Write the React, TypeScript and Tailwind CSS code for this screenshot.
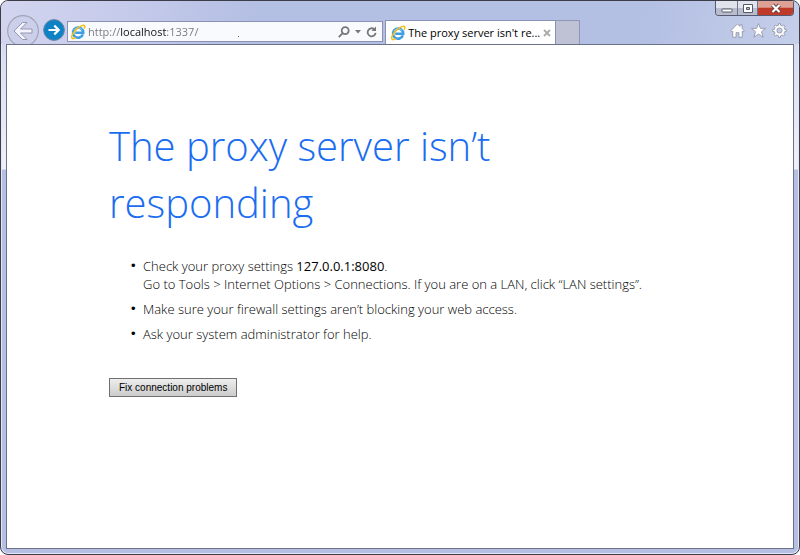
import React from "react";

const IeLogo = () => (
  <svg aria-hidden="true" className="size-4 shrink-0" viewBox="0 0 16 16" fill="none">
    <path
      d="M12.9 10.4A5.1 5.1 0 1 1 13.2 8.7H5.2"
      stroke="#3d9fe2"
      strokeWidth="2.6"
    />
    <path d="M4 6.2A4.9 4.9 0 0 1 12 5.6" stroke="#8fd2f7" strokeWidth="1" />
    <path
      d="M14.2 4.6C15.2 2.6 14.9 1.2 13.4 1.3C10.3 1.6 4.9 5.9 2.6 10.1C1.3 12.5 1.3 14.6 3 14.6C3.9 14.6 4.8 14.1 5.6 13.6"
      stroke="#f7bd1c"
      strokeWidth="1.6"
    />
  </svg>
);

const Navigation = () => (
  <div className="flex h-7 items-center">
    <button type="button" aria-label="Back" className="-mb-[3px] size-8 shrink-0 self-end">
      <svg className="size-8" viewBox="0 0 32 32" fill="none">
        <circle cx="16" cy="16" r="15.3" fill="#cccfea" stroke="#a2a4b6" strokeWidth="1.2" />
        <path
          d="M15.5 7.5L7 16L15.5 24.5H20L13.5 18H25V14H13.5L20 7.5Z"
          fill="#f3f4fd"
          stroke="#9597ae"
          strokeWidth="1"
        />
      </svg>
    </button>
    <button type="button" aria-label="Forward" className="ml-1 size-[22px] shrink-0">
      <svg className="size-[22px]" viewBox="0 0 22 22" fill="none">
        <circle cx="11" cy="11" r="10.4" fill="#0d83c5" stroke="#6b84a4" strokeWidth="1" />
        <path d="M5.5 11H15M11.3 6.6L15.7 11L11.3 15.4" stroke="#fff" strokeWidth="2.2" />
      </svg>
    </button>
  </div>
);

const AddressBar = () => (
  <form className="flex h-[21px] min-w-0 flex-1 items-center border border-[#8b91b4] bg-[#f9fafe] pr-1 pl-0.5">
    <IeLogo />
    <input
      type="text"
      aria-label="Address"
      defaultValue="http://localhost:1337/"
      className="ml-0.5 w-[148px] bg-[linear-gradient(90deg,#777_32px,#111_32px,#111_79px,#777_79px)] bg-clip-text pt-0.5 text-[11px] text-transparent outline-none"
      style={{ fontFamily: '"Open Sans", sans-serif' }}
    />
    <span className="mb-1 ml-0.5 size-px shrink-0 self-end bg-[#666]" />
    <span className="flex-1" />
    <button type="button" aria-label="Search">
      <svg className="h-3 w-3" viewBox="0 0 12 12" fill="none" stroke="#777" strokeWidth="1.8">
        <circle cx="7.2" cy="4.6" r="3.5" />
        <path d="M4.7 7.2L.8 11.2" />
      </svg>
    </button>
    <button type="button" aria-label="Show address list" className="ml-1">
      <svg className="h-1 w-2" viewBox="0 0 8 4" fill="#777">
        <path d="M1 0H7L4 3.5Z" />
      </svg>
    </button>
    <button type="button" aria-label="Refresh" className="ml-1">
      <svg className="size-3" viewBox="0 0 12 12" fill="none">
        <path d="M8.2 3.2A4 4 0 1 0 9.6 6.8" stroke="#777" strokeWidth="1.8" />
        <path d="M10 .5V5H5.5Z" fill="#777" />
      </svg>
    </button>
  </form>
);

const Tabs = () => (
  <div className="flex h-6 flex-1 items-stretch">
    <div className="flex w-[171px] items-center border border-b-0 border-[#8b91b4] bg-white pr-1 pl-1">
      <IeLogo />
      <span
        className="ml-0.5 flex-1 truncate text-[11px]/4 text-black"
        style={{ fontFamily: '"Open Sans", sans-serif' }}
      >
        The proxy server isn't re...
      </span>
      <button type="button" aria-label="Close tab">
        <svg className="size-2" viewBox="0 0 8 8" stroke="#aaa" strokeWidth="1.8">
          <path d="M1 1L7 7M7 1L1 7" />
        </svg>
      </button>
    </div>
    <button
      type="button"
      aria-label="New tab"
      className="w-6 border border-b-0 border-l-0 border-[#8f95b5] bg-[#bfc2d4]"
    />
  </div>
);

const WindowControls = () => (
  <div className="flex h-[15px] overflow-hidden rounded-b border border-t-0 border-[#555a70]">
    <button
      type="button"
      aria-label="Minimize"
      className="flex w-[22px] items-center justify-center border-r border-[#6f758c] bg-linear-to-b from-[#e1e3ec] from-50% to-[#b8bccd] to-50%"
    >
      <svg className="h-3 w-3" viewBox="0 0 12 12">
        <rect x="1" y="7" width="10" height="3" rx="0.5" fill="#fff" stroke="#555a6b" />
      </svg>
    </button>
    <button
      type="button"
      aria-label="Maximize"
      className="flex w-5 items-center justify-center border-r border-[#6f758c] bg-linear-to-b from-[#e1e3ec] from-50% to-[#b8bccd] to-50%"
    >
      <svg className="h-3 w-3" viewBox="0 0 12 12">
        <path
          d="M1.5 2.5H10.5V10.5H1.5ZM4.5 5.5H7.5V7.5H4.5Z"
          fill="#fff"
          fillRule="evenodd"
          stroke="#555a6b"
        />
      </svg>
    </button>
    <button
      type="button"
      aria-label="Close"
      className="flex w-[35px] items-center justify-center bg-linear-to-b from-[#dda195] from-45% to-[#bf3a28] to-50%"
    >
      <svg className="h-3 w-3" viewBox="0 0 12 12" fill="none">
        <path d="M2.5 3L9.5 10M9.5 3L2.5 10" stroke="#663f46" strokeWidth="4" />
        <path d="M2.5 3L9.5 10M9.5 3L2.5 10" stroke="#fff" strokeWidth="2.2" />
      </svg>
    </button>
  </div>
);

const Toolbar = () => (
  <div className="flex gap-1.5 pr-[7px] pb-1.5">
    <button type="button" aria-label="Home">
      <svg className="size-[15px]" viewBox="0 0 14 14">
        <path
          d="M7 .8L.7 7.2L1.7 8.3L2.5 7.6V13.3H5.7V9H8.3V13.3H11.5V7.6L12.3 8.3L13.3 7.2L11.3 5.2V1.7H9.3V3.2Z"
          fill="#fff"
          stroke="#969aad"
          strokeWidth=".9"
        />
      </svg>
    </button>
    <button type="button" aria-label="Favorites">
      <svg className="size-[15px]" viewBox="0 0 14 14">
        <path
          d="M7 .5L8.8 5H13.6L9.8 8.1L11.3 13.3L7 10.3L2.7 13.3L4.2 8.1L.4 5H5.2Z"
          fill="#fff"
          stroke="#969aad"
          strokeWidth=".9"
        />
      </svg>
    </button>
    <button type="button" aria-label="Tools">
      <svg className="size-[15px]" viewBox="0 0 14 14">
        <path
          d="M5.9 2.2L6.2 .6H7.8L8.1 2.2L9.6 2.8L11 1.9L12.1 3L11.2 4.4L11.8 5.9L13.4 6.2V7.8L11.8 8.1L11.2 9.6L12.1 11L11 12.1L9.6 11.2L8.1 11.8L7.8 13.4H6.2L5.9 11.8L4.4 11.2L3 12.1L1.9 11L2.8 9.6L2.2 8.1L.6 7.8V6.2L2.2 5.9L2.8 4.4L1.9 3L3 1.9L4.4 2.8ZM7 4.6A2.4 2.4 0 1 0 7 9.4A2.4 2.4 0 1 0 7 4.6Z"
          fill="#fff"
          fillRule="evenodd"
          stroke="#969aad"
          strokeWidth=".9"
        />
      </svg>
    </button>
  </div>
);

const Bullet = () => (
  <span className="w-3 shrink-0 font-normal" style={{ fontFamily: '"Liberation Sans", sans-serif' }}>
    •
  </span>
);

const ErrorPage = () => (
  <main
    className="flex-1 border border-[#6d7288] bg-white pt-[72px] pr-[120px] pb-10 pl-[102px] font-light"
    style={{ fontFamily: '"Open Sans", "Noto Sans", sans-serif' }}
  >
    <h1 className="max-w-[480px] text-[40px]/[57px] font-light text-[#1a6df0]">
      The proxy server isn’t responding
    </h1>
    <ul className="mt-[26px] ml-[22px] space-y-[7px] text-[13px]/[18px] text-black">
      <li className="flex">
        <Bullet />
        <p>
          Check your proxy settings <span className="font-normal">127.0.0.1:8080</span>.
          <br />
          Go to Tools &gt; Internet Options &gt; Connections. If you are on a LAN, click “LAN settings”.
        </p>
      </li>
      <li className="flex">
        <Bullet />
        <p>Make sure your firewall settings aren’t blocking your web access.</p>
      </li>
      <li className="flex">
        <Bullet />
        <p>Ask your system administrator for help.</p>
      </li>
    </ul>
    <button
      type="button"
      className="mt-[35px] block border border-[#707070] bg-linear-to-b from-[#eee] to-[#ccc] px-[9px] text-[10px]/[17px] font-normal text-black"
      style={{ fontFamily: '"Liberation Sans", sans-serif' }}
    >
      Fix connection problems
    </button>
  </main>
);

const App = () => {
  return (
    <div className="min-h-screen bg-white">
      <div className="flex min-h-screen flex-col rounded-lg border border-[#3d3d4a] bg-[linear-gradient(180deg,#c9cdec_0,#dadff2_60px,#f0f0f8_168px,#b4bfe2_169px)] px-[5px] pb-[5px] shadow-[inset_0_0_0_1px_#e4e8f8]">
        <header className="-mx-[5px] flex h-[43px] items-end overflow-hidden rounded-t-lg bg-[linear-gradient(100deg,#d3d5ef_0,#c3c9ea_18%,#b3bfe3_32%,#b3bfe3_80%,#c5cfea_100%)] pl-1.5">
          <div className="flex min-w-0 flex-[10] items-end">
            <Navigation />
            <div className="flex min-w-0 flex-1 pb-[2px] pl-[2px]">
              <AddressBar />
            </div>
          </div>
          <div className="ml-[2px] flex flex-[11] items-end self-stretch">
            <Tabs />
            <div className="flex flex-col items-end justify-between self-stretch pr-[5px]">
              <WindowControls />
              <Toolbar />
            </div>
          </div>
        </header>
        <ErrorPage />
      </div>
    </div>
  );
};

export default App;
